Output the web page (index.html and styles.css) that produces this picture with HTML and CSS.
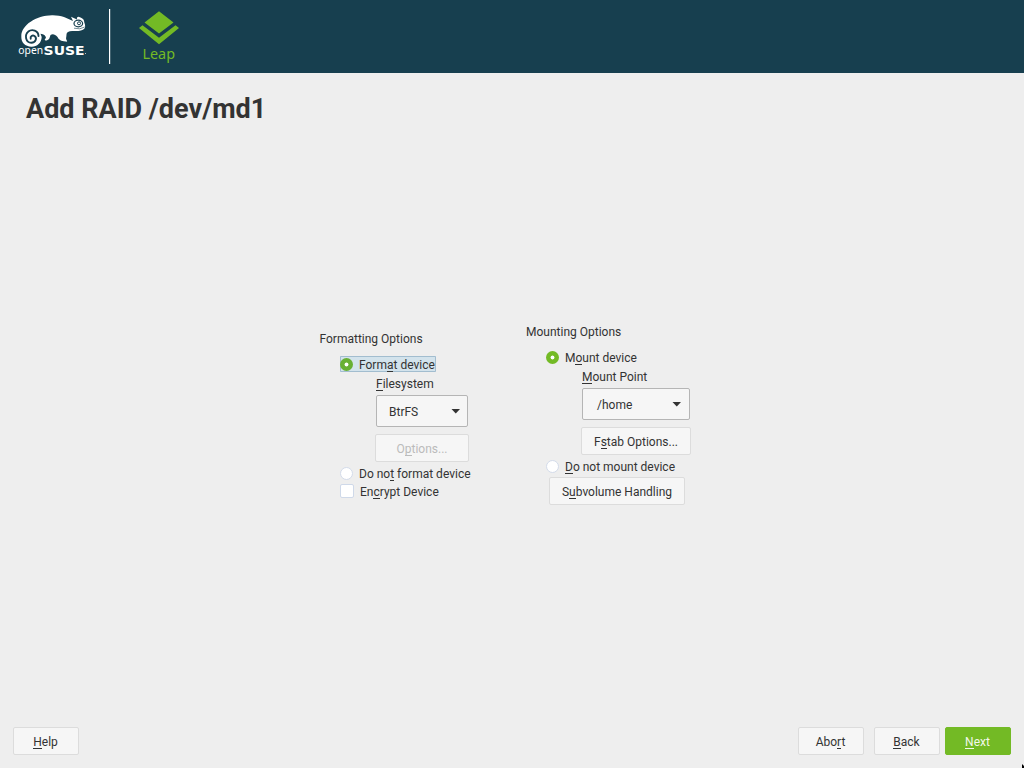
FILE: index.html
```html
<!DOCTYPE html>
<html lang="en">
<head>
<meta charset="utf-8">
<title>Add RAID /dev/md1</title>
<link rel="stylesheet" href="styles.css">
</head>
<body>
<div class="installer">
  <header class="banner">
    <svg class="brand" width="200" height="73" viewBox="0 0 200 73">
      <path fill="#fff" d="M21.300 36C21.500 25 36 15.500 52 15.200C61 15 67 18 73 21L71 16.800L77 19.500C76.500 17 78 16 80 17.300C83 18.500 84.300 20 84.300 22.500C85.300 25 85.500 27.500 84.500 28.500C82.500 31 78 31.200 73 31C69 30.800 66.500 32 66.500 34.500C66.500 37 65.500 38.500 66.500 40C67.500 41.500 67.500 42 65.500 41.600C61 41 59 40 57.500 37C55 34 52.500 33.500 50.500 35C49.500 37.500 50 39.500 46.500 40.500C44 41 44.500 39 46 38C45.500 35.500 44 34 40.500 33.800L41.700 37C41.500 43 37 46.800 31.500 46.700C25 46.500 21 42.500 21.300 36Z"/>
      <path class="spiral" d="M38.500 36C38.300 30.500 32 28.600 28.300 31.600C24.300 35 25.500 42.500 31.300 42.800C36 42.700 37.200 37.700 34.500 36C32.500 34.800 30 36.300 30.700 38.700"/>
      <ellipse cx="78.300" cy="23.500" rx="4.300" ry="3.300" fill="#fff" stroke="#173f4f" stroke-width="1.200"/>
      <circle cx="79" cy="23.300" r="1.500" fill="#fff" stroke="#173f4f"/>
      <path d="M74 28.200Q80 30 84.700 27" fill="none" stroke="#173f4f" stroke-width=".6"/>
      <text class="brand-name"><tspan class="brand-open" x="18.300" y="54.400" textLength="24.800" lengthAdjust="spacingAndGlyphs">open</tspan><tspan class="brand-suse" x="43.600" y="54.600" textLength="41" lengthAdjust="spacingAndGlyphs">SUSE</tspan></text>
      <rect x="85" y="53" width="1" height="1" fill="#b9c5ca"/>
      <rect x="109" y="9" width="1.200" height="55" fill="#fff"/>
      <path fill="#73ba25" d="M159 11.300L173.500 22.500L159 33.500L144.500 22.500ZM142.500 25.300L159 37.800L175.500 25.300L179 28L159 44.200L139 28Z"/>
      <text class="brand-leap" x="142.500" y="59" textLength="32.500" lengthAdjust="spacingAndGlyphs">Leap</text>
    </svg>
  </header>
  <h1 class="title">Add RAID /dev/md1</h1>
  <main class="content">
    <section class="group formatting">
      <h2 class="group-title">Formatting Options</h2>
      <div class="choice first focused"><i class="radio on"></i><span>Form<u>a</u>t device</span></div>
      <div class="field-label"><u>F</u>ilesystem</div>
      <div class="combo filesystem"><span>BtrFS</span><svg class="arrow" width="9" height="5"><path d="M.5 0H9L4.750 4.500Z"/></svg></div>
      <div class="button options disabled"><span>O<u>p</u>tions...</span></div>
      <div class="choice"><i class="radio"></i><span>Do no<u>t</u> format device</span></div>
      <div class="choice"><i class="checkbox"></i><span>En<u>c</u>rypt Device</span></div>
    </section>
    <section class="group mounting">
      <h2 class="group-title">Mounting Options</h2>
      <div class="choice first"><i class="radio on"></i><span>M<u>o</u>unt device</span></div>
      <div class="field-label"><u>M</u>ount Point</div>
      <div class="combo mountpoint"><span>/home</span><svg class="arrow" width="9" height="5"><path d="M.5 0H9L4.750 4.500Z"/></svg></div>
      <div class="button fstab"><span>F<u>s</u>tab Options...</span></div>
      <div class="choice"><i class="radio"></i><span><u>D</u>o not mount device</span></div>
      <div class="button subvolume"><span>S<u>u</u>bvolume Handling</span></div>
    </section>
  </main>
  <footer class="actions">
    <div class="button action"><span><u>H</u>elp</span></div>
    <div class="button action abort"><span>Abo<u>r</u>t</span></div>
    <div class="button action back"><span><u>B</u>ack</span></div>
    <div class="button action primary"><span><u>N</u>ext</span></div>
  </footer>
  <svg class="pointer" width="3" height="4"><path d="M1 0L3 2V4H1Z"/></svg>
</div>
</body>
</html>
```

FILE: styles.css
```css
* { box-sizing: border-box; }
body {
  margin: 0;
  background: #eee;
  color: #333;
  font: 12px/16px Roboto, sans-serif;
}
.installer {
  position: relative;
  display: flex;
  flex-direction: column;
  width: 1024px;
  height: 768px;
  overflow: hidden;
}
.banner { height: 73px; background: #173f4f; }
.brand { display: block; }
.spiral { fill: none; stroke: #173f4f; stroke-width: 1.9; stroke-linecap: round; }
.brand-name { fill: #fff; }
.brand-open { font: 11.5px "Noto Sans", sans-serif; }
.brand-suse { font: 700 12.8px "DejaVu Sans", sans-serif; }
.brand-leap { font: 15px "Noto Sans", sans-serif; fill: #73ba25; }
.title {
  margin: 18px 0 0 26px;
  font-size: 27px;
  font-weight: 700;
  line-height: 36px;
}
.content {
  flex: 1;
  display: flex;
  align-items: flex-start;
  padding: 197px 0 0 319px;
}
.group {
  display: flex;
  flex-direction: column;
  align-items: flex-start;
  white-space: nowrap;
}
.formatting { width: 207px; padding-top: 7px; }
.group-title { margin: 0; font-size: 12px; font-weight: 400; line-height: 16px; }
.formatting .group-title { padding-left: .5px; }
u {
  text-decoration: none;
  background: linear-gradient(currentColor, currentColor) 0 100% / 100% 1px no-repeat;
}
.choice {
  display: flex;
  align-items: center;
  gap: 6px;
  height: 18px;
  margin-left: 20px;
  padding: 0 1px;
}
.choice.first { height: 16px; margin: 9px 0 3px 20px; }
.choice.first span { padding-top: 2px; line-height: 16px; }
.formatting .choice { margin-left: 21px; }
.choice.first + .field-label { margin-top: 1px; }
.focused { background: #d3e3ec; box-shadow: inset 0 0 0 1px #a2bdcf; border-radius: 1px; }
.radio {
  width: 13px;
  height: 13px;
  margin: 0 0 1px -1px;
  border: 1px solid #d3dbea;
  border-radius: 50%;
  background: #fff;
}
.radio.on { margin-bottom: 0; border: 0; background: radial-gradient(circle, #fff 0 1.6px, #73ba25 2.3px); }
.focused .radio.on { background: radial-gradient(circle, #fff 0 1.6px, #68b034 2.3px); }
.checkbox {
  width: 14px;
  height: 14px;
  margin: 0 0 2px -1px;
  border: 1px solid #cfd9e9;
  border-radius: 2px;
  background: #fff;
}
.field-label { height: 16px; margin: 0 0 3px 56px; }
.formatting .field-label { margin-left: 57px; }
.combo {
  display: flex;
  justify-content: space-between;
  align-items: center;
  height: 32px;
  margin-left: 57px;
  border: 1px solid #b5b5b5;
  border-radius: 2px;
  background: #f6f6f6;
}
.filesystem { width: 92px; padding: 1px 7.5px 0 12px; }
.mountpoint { width: 108px; margin-left: 56px; padding: 1px 8px 0 14px; }
.arrow { fill: #333; }
.button {
  display: flex;
  align-items: center;
  justify-content: center;
  height: 28px;
  padding-top: 1px;
  border: 1px solid #dcdcdc;
  border-radius: 2px;
  background: #f6f6f6;
}
.options { width: 94px; margin: 7px 0 3px 56px; }
.fstab { width: 110px; margin: 7px 0 3px 55px; }
.subvolume { width: 136px; margin: 1px 0 0 23px; }
.disabled { color: #bbb; }
.actions { display: flex; height: 41px; padding: 0 13px; }
.action { width: 66px; padding-right: 1px; }
.abort { margin-left: auto; }
.back { margin: 0 5px 0 10px; }
.primary { color: #f2f8ea; border-color: #73ba25; background: #73ba25; }
.pointer { position: absolute; right: 0; bottom: 0; }
```
